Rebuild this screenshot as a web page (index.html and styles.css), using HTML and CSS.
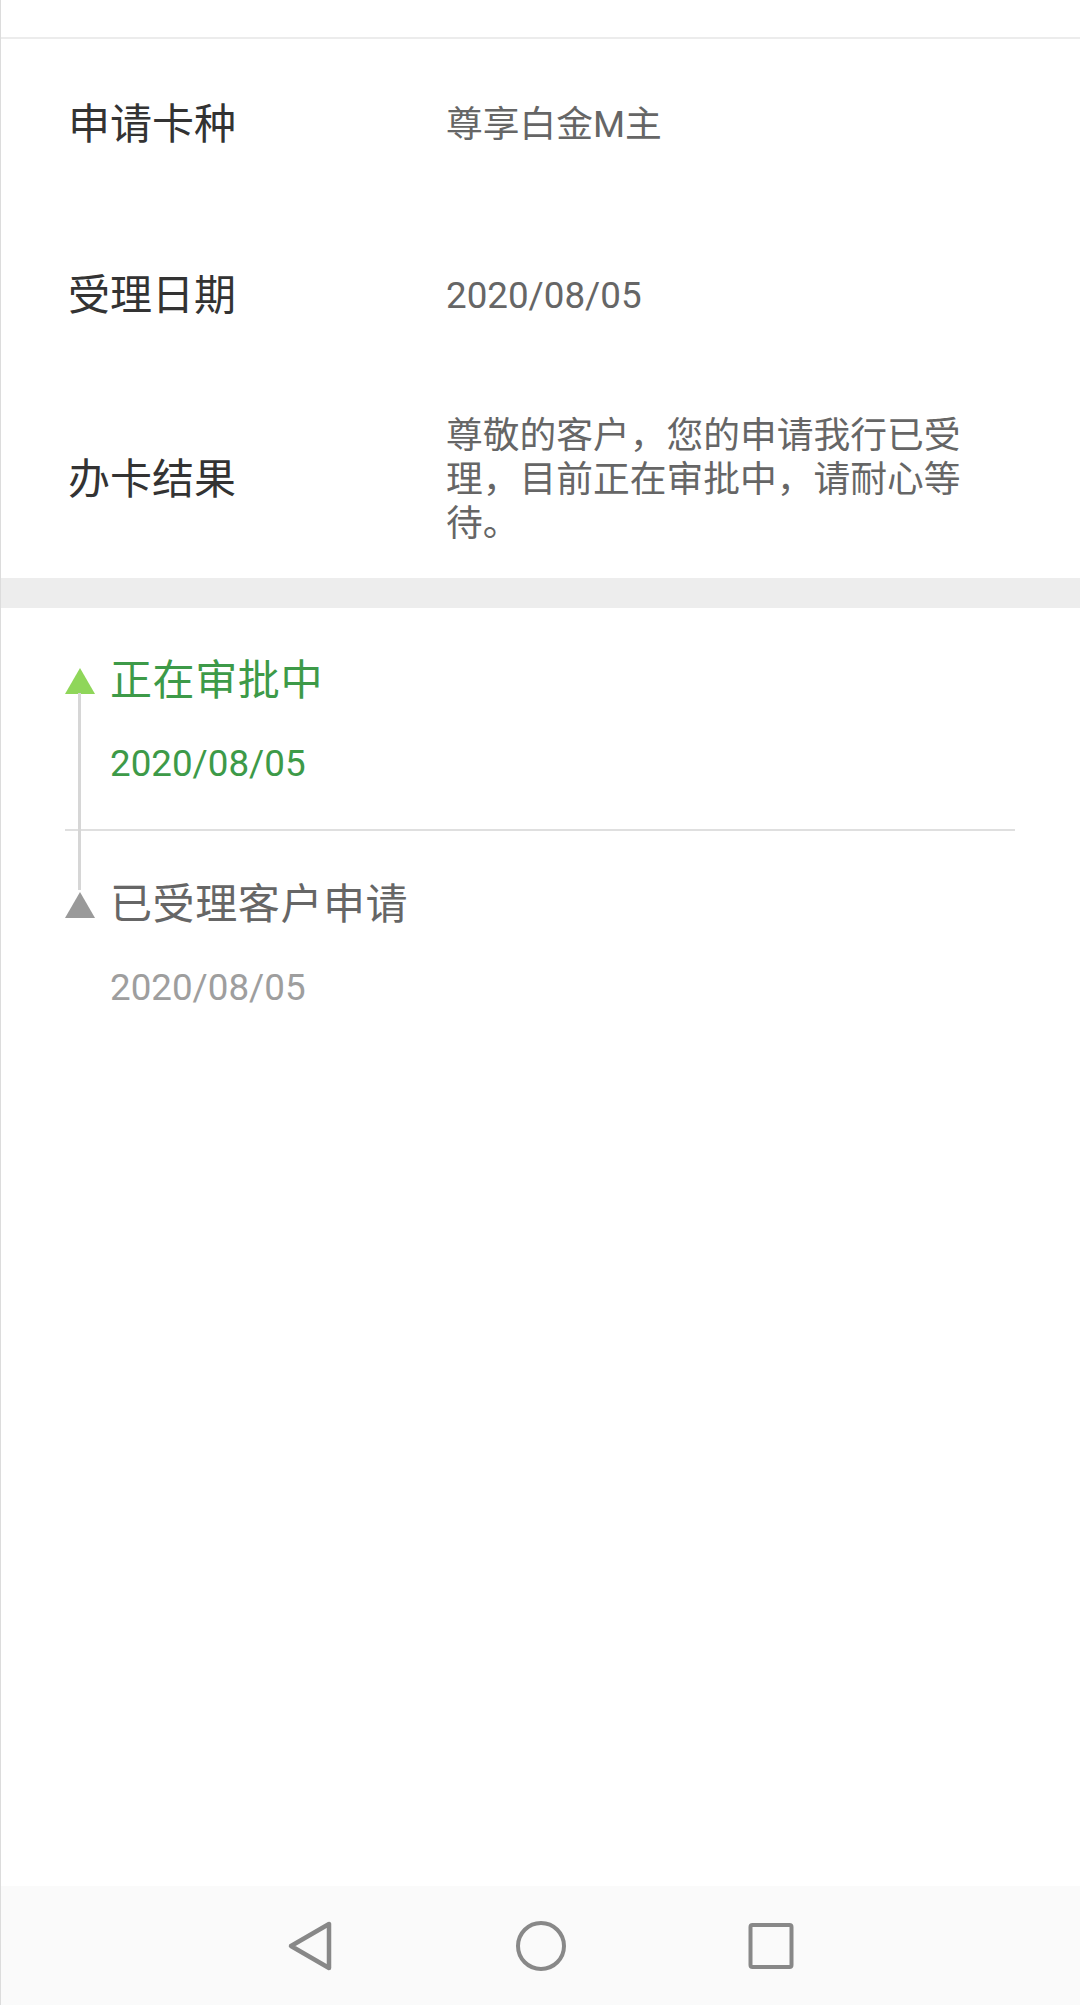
FILE: index.html
```html
<!DOCTYPE html>
<html lang="zh-CN">
<head>
<meta charset="utf-8">
<title>办卡进度</title>
<link rel="stylesheet" href="styles.css">
</head>
<body>
<div class="page">
  <div class="main">
    <div class="topbar"></div>
    <section class="info">
      <div class="row">
        <div class="label">申请卡种</div>
        <div class="value">尊享白金M主</div>
      </div>
      <div class="row">
        <div class="label">受理日期</div>
        <div class="value">2020/08/05</div>
      </div>
      <div class="row row-tall">
        <div class="label">办卡结果</div>
        <div class="value">尊敬的客户，您的申请我行已受理，目前正在审批中，请耐心等待。</div>
      </div>
    </section>
    <div class="band"></div>
    <section class="timeline">
      <div class="connector"></div>
      <div class="step step-active">
        <div class="step-head">
          <span class="marker"></span>
          <span class="step-title">正在审批中</span>
        </div>
        <div class="step-date">2020/08/05</div>
      </div>
      <div class="step step-done">
        <div class="step-head">
          <span class="marker"></span>
          <span class="step-title">已受理客户申请</span>
        </div>
        <div class="step-date">2020/08/05</div>
      </div>
    </section>
  </div>
  <nav class="navbar">
    <svg class="nav-icon" viewBox="0 0 60 60" width="60" height="60"><path d="M48 8 L48 52 L10 30 Z" fill="none" stroke="#888" stroke-width="4.5" stroke-linejoin="round"/></svg>
    <svg class="nav-icon" viewBox="0 0 60 60" width="60" height="60"><circle cx="30" cy="30" r="23" fill="none" stroke="#888" stroke-width="4"/></svg>
    <svg class="nav-icon" viewBox="0 0 60 60" width="60" height="60"><rect x="9.5" y="9" width="41" height="42" rx="2" fill="none" stroke="#888" stroke-width="4"/></svg>
  </nav>
</div>
</body>
</html>
```

FILE: styles.css
```css
* { box-sizing: border-box; }
html, body { margin: 0; padding: 0; background: #fff; }
body {
  font-family: Roboto, "Noto Sans CJK SC", "Noto Sans", sans-serif;
}
.page {
  width: 1080px;
  height: 2005px;
  display: flex;
  flex-direction: column;
  border-left: 1px solid #dcdcdc;
  background: #fff;
}
.main { flex: 1; }
.topbar {
  height: 39px;
  border-bottom: 2px solid #ececec;
}
.info { padding-left: 67px; }
.row {
  display: flex;
  align-items: center;
  min-height: 171px;
}
.row-tall { min-height: 197px; }
.label {
  width: 378px;
  flex: none;
  font-size: 42px;
  line-height: 56px;
  color: #333;
}
.value {
  width: 520px;
  font-size: 36.75px;
  line-height: 44px;
  color: #666;
}
.band {
  height: 30px;
  background: #ededed;
}
.timeline {
  position: relative;
  padding: 0 65px 0 64px;
}
.connector {
  position: absolute;
  left: 77px;
  top: 85px;
  width: 3px;
  height: 197px;
  background: #d6d6d6;
}
.step {
  padding-top: 45px;
  padding-bottom: 43px;
}
.step-active { border-bottom: 2px solid #dfdfdf; }
.step-done { padding-top: 46px; }
.step-head {
  display: flex;
  align-items: center;
  gap: 15px;
}
.marker {
  width: 0;
  height: 0;
  border-left: 15px solid transparent;
  border-right: 15px solid transparent;
  border-bottom: 26px solid #999;
  flex: none;
}
.step-title {
  font-size: 42px;
  line-height: 56px;
  letter-spacing: 0.6px;
}
.step-date {
  margin-top: 33px;
  padding-left: 45px;
  font-size: 36.75px;
  line-height: 44px;
}
.step-active .marker { border-bottom-color: #8fd65a; }
.step-active .step-title,
.step-active .step-date { color: #3d9a48; }
.step-done .marker { border-bottom-color: #9a9a9a; }
.step-done .step-title { color: #666; }
.step-done .step-date { color: #9e9e9e; }
.navbar {
  height: 119px;
  background: #fafafa;
  display: flex;
  justify-content: center;
  align-items: center;
  gap: 170px;
}
.nav-icon { display: block; }
```
